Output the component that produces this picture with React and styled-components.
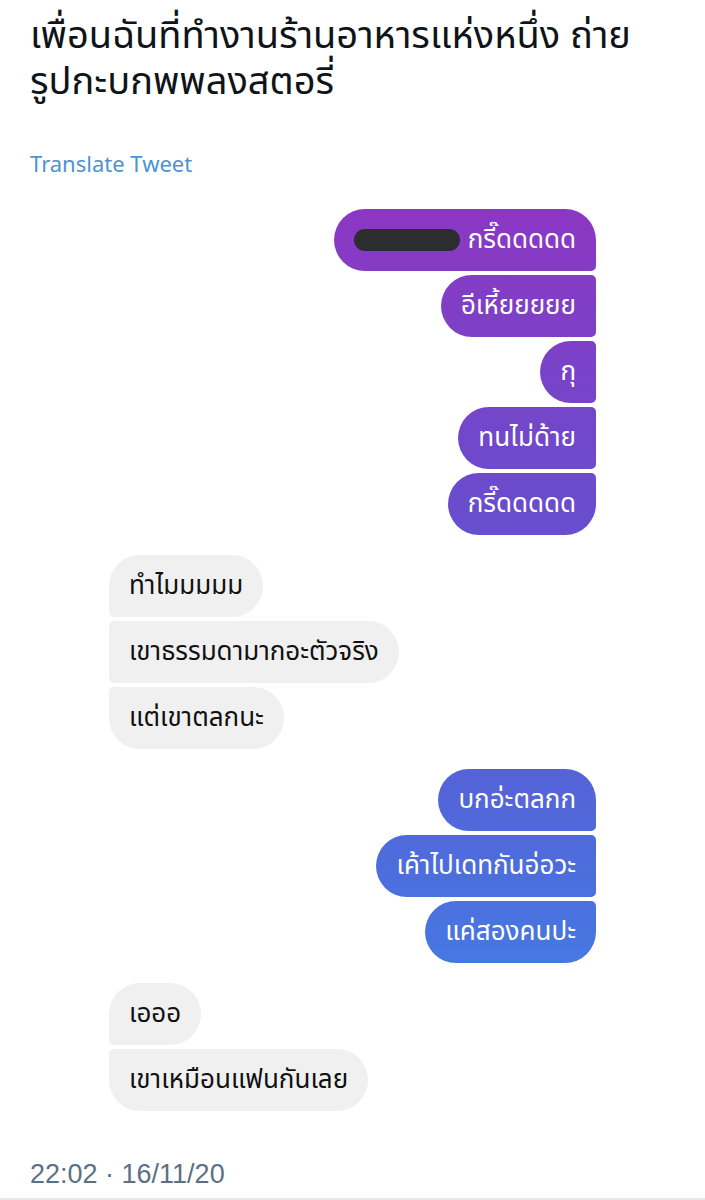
import React from "react";
import styled, { createGlobalStyle } from "styled-components";

const Global = createGlobalStyle`
  body {
    margin: 0;
    background: #fff;
    font-family: "Noto Sans", "Noto Sans Thai", "DejaVu Sans", sans-serif;
  }
`;

const Page = styled.div`
  width: 705px;
  height: 1200px;
  box-sizing: border-box;
  display: flex;
  flex-direction: column;
  overflow: hidden;
`;

const Title = styled.div`
  padding: 10px 30px 0;
  font-size: 38px;
  line-height: 46px;
  color: #0f1419;
`;

const Translate = styled.div`
  padding: 46px 30px 0;
  font-size: 22px;
  color: #4a93d6;
`;

const Chat = styled.div`
  width: 487px;
  margin: 31px auto 0;
  display: flex;
  flex-direction: column;
  gap: 20px;
`;

const Group = styled.div`
  display: flex;
  flex-direction: column;
  align-items: ${(p) => (p.$mine ? "flex-end" : "flex-start")};
  gap: 4px;
`;

const R = 31;
const S = 5;

const Bubble = styled.div`
  height: 62px;
  box-sizing: border-box;
  padding: 0 20px;
  display: flex;
  align-items: center;
  font-size: 26px;
  white-space: nowrap;
  color: ${(p) => (p.$mine ? "#fff" : "#111")};
  background: ${(p) =>
    p.$mine
      ? "linear-gradient(to bottom, #8c37c3 210px, #6a4ccd 500px, #5463d8 780px, #4678e2 962px) fixed"
      : "#f0f0f0"};
  border-radius: ${(p) =>
    p.$mine
      ? `${R}px ${p.$first ? R : S}px ${p.$last ? R : S}px ${R}px`
      : `${p.$first ? R : S}px ${R}px ${R}px ${p.$last ? R : S}px`};
`;

const Censor = styled.span`
  display: inline-block;
  width: 106px;
  height: 22px;
  border-radius: 11px;
  background: #2b2d2f;
  margin-right: 8px;
`;

const Stamp = styled.div`
  margin-top: auto;
  padding: 0 30px 8px;
  font-family: "Liberation Sans", "Noto Sans", sans-serif;
  font-size: 27px;
  color: #5b7083;
  border-bottom: 2px solid #e6e9ea;
`;

const groups = [
  { mine: true, msgs: ["__ กรี๊ดดดดด", "อีเหี้ยยยยย", "กุ", "ทนไม่ด้าย", "กรี๊ดดดดด"] },
  { mine: false, msgs: ["ทำไมมมมม", "เขาธรรมดามากอะตัวจริง", "แต่เขาตลกนะ"] },
  { mine: true, msgs: ["บกอ่ะตลกก", "เค้าไปเดทกันอ่อวะ", "แค่สองคนปะ"] },
  { mine: false, msgs: ["เอออ", "เขาเหมือนแฟนกันเลย"] },
];

export default function App() {
  return (
    <Page>
      <Global />
      <Title>
        เพื่อนฉันที่ทำงานร้านอาหารแห่งหนึ่ง ถ่าย
        <br />
        รูปกะบกพพลงสตอรี่
      </Title>
      <Translate>Translate Tweet</Translate>
      <Chat>
        {groups.map((g, gi) => (
          <Group key={gi} $mine={g.mine}>
            {g.msgs.map((m, i) => (
              <Bubble
                key={i}
                $mine={g.mine}
                $first={i === 0}
                $last={i === g.msgs.length - 1}
              >
                {m.startsWith("__ ") ? (
                  <>
                    <Censor />
                    {m.slice(3)}
                  </>
                ) : (
                  m
                )}
              </Bubble>
            ))}
          </Group>
        ))}
      </Chat>
      <Stamp>22:02 · 16/11/20</Stamp>
    </Page>
  );
}
